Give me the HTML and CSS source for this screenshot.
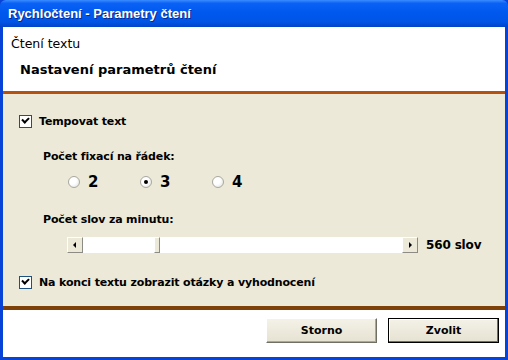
FILE: index.html
```html
<!DOCTYPE html>
<html lang="cs">
<head>
    <meta charset="UTF-8">
    <title>Rychločtení - Parametry čtení</title>
    <link rel="stylesheet" href="styles.css">
</head>
<body>
    <div class="window">
        <div class="titlebar">Rychločtení - Parametry čtení</div>

        <div class="header">
            <p class="subtitle">Čtení textu</p>
            <h1>Nastavení parametrů čtení</h1>
        </div>

        <div class="content">
            <label class="check">
                <span class="box checked"></span>
                Tempovat text
            </label>

            <p class="group-label">Počet fixací na řádek:</p>
            <div class="radios">
                <label class="radio"><span class="dot"></span>2</label>
                <label class="radio"><span class="dot on"></span>3</label>
                <label class="radio"><span class="dot"></span>4</label>
            </div>

            <p class="group-label second">Počet slov za minutu:</p>
            <div class="speed">
                <div class="scrollbar">
                    <span class="arrow left"></span>
                    <div class="track">
                        <span class="thumb"></span>
                    </div>
                    <span class="arrow right"></span>
                </div>
                <span class="speed-value">560 slov</span>
            </div>

            <label class="check last">
                <span class="box checked"></span>
                Na konci textu zobrazit otázky a vyhodnocení
            </label>
        </div>

        <div class="footer">
            <button class="btn">Storno</button>
            <button class="btn default">Zvolit</button>
        </div>
    </div>
</body>
</html>
```

FILE: styles.css
```css
body {
    margin: 0;
    width: 508px;
    height: 360px;
    overflow: hidden;
    font-family: 'DejaVu Sans', Verdana, sans-serif;
    color: black;
}

p {
    margin: 0;
}

.window {
    display: flex;
    flex-direction: column;
    height: 360px;
    box-sizing: border-box;
    border: solid 3px #0843d8;
    border-top: none;
    background-color: #0843d8;
}

.titlebar {
    height: 27px;
    margin: 0 -3px;
    padding-left: 8px;
    box-sizing: border-box;
    border-radius: 6px 6px 0 0;
    background: linear-gradient(to bottom, #3a8cff 0%, #0a62f5 12%, #0058ee 45%, #0055e6 80%, #0344c8 100%);
    color: white;
    font-family: 'Liberation Sans', Arial, sans-serif;
    font-size: 13px;
    font-weight: bold;
    line-height: 27px;
    text-shadow: 1px 1px 0 #0a2a90;
}

.header {
    height: 67px;
    padding: 9px 0 0 8px;
    box-sizing: border-box;
    background-color: white;
    border-bottom: solid 3px #b5520f;
}

.subtitle {
    font-size: 12.5px;
}

h1 {
    margin: 11px 0 0 9px;
    font-size: 13px;
    font-weight: bold;
}

.content {
    height: 216px;
    box-sizing: border-box;
    padding: 21px 0 0 16px;
    background-color: #ece9d8;
    border-bottom: solid 4px #7e4209;
    font-size: 11px;
    font-weight: bold;
    letter-spacing: -0.15px;
}

.check {
    display: flex;
    align-items: center;
    gap: 7px;
}

.check.last {
    margin-top: 23px;
}

.box {
    width: 11px;
    height: 11px;
    border: solid 1px #1c5180;
    background: white;
    position: relative;
}

.box.checked::after {
    content: "";
    position: absolute;
    left: 2px;
    top: 1px;
    width: 5px;
    height: 3px;
    border-left: solid 2px black;
    border-bottom: solid 2px black;
    transform: rotate(-45deg);
}

.group-label {
    margin: 22px 0 0 24px;
}

.group-label.second {
    margin-top: 22px;
}

.radios {
    display: flex;
    margin: 10px 0 0 49px;
}

.radio {
    display: flex;
    align-items: center;
    gap: 8px;
    width: 72px;
    font-size: 15px;
}

.dot {
    width: 10px;
    height: 10px;
    border-radius: 50%;
    border: solid 1px #a8a8a0;
    background: radial-gradient(circle at 35% 35%, white 40%, #dcdcd4 100%);
    position: relative;
}

.dot.on::after {
    content: "";
    position: absolute;
    left: 3px;
    top: 3px;
    width: 4px;
    height: 4px;
    border-radius: 50%;
    background: black;
}

.speed {
    display: flex;
    align-items: center;
    gap: 8px;
    margin: 11px 0 0 48px;
}

.scrollbar {
    display: flex;
    width: 351px;
    height: 16px;
}

.arrow {
    width: 16px;
    height: 16px;
    box-sizing: border-box;
    background: #ece9d8;
    border: solid 1px;
    border-color: white #8c8c84 #8c8c84 white;
    position: relative;
}

.arrow::after {
    content: "";
    position: absolute;
    top: 4px;
    border-top: solid 3px transparent;
    border-bottom: solid 3px transparent;
}

.arrow.left::after {
    left: 5px;
    border-right: solid 3px black;
}

.arrow.right::after {
    left: 6px;
    border-left: solid 3px black;
}

.track {
    flex: 1;
    background: white;
    position: relative;
}

.thumb {
    position: absolute;
    left: 71px;
    top: 0;
    width: 6px;
    height: 16px;
    box-sizing: border-box;
    background: #ece9d8;
    border: solid 1px;
    border-color: white #8c8c84 #8c8c84 white;
}

.speed-value {
    font-size: 12px;
}

.footer {
    flex: 1;
    display: flex;
    justify-content: flex-end;
    align-items: flex-start;
    gap: 11px;
    padding: 8px 6px 0 0;
    background-color: white;
}

.btn {
    width: 111px;
    height: 25px;
    font-family: 'DejaVu Sans', Verdana, sans-serif;
    font-size: 11px;
    font-weight: bold;
    background: linear-gradient(to bottom, #f4f2e8, #e6e2d2);
    border: solid 1px;
    border-color: white #716f64 #716f64 white;
    box-shadow: inset -1px -1px 0 #aca899;
}

.btn.default {
    border: solid 1px black;
    box-shadow: inset -1px -1px 0 #716f64, inset 1px 1px 0 white;
}
```
